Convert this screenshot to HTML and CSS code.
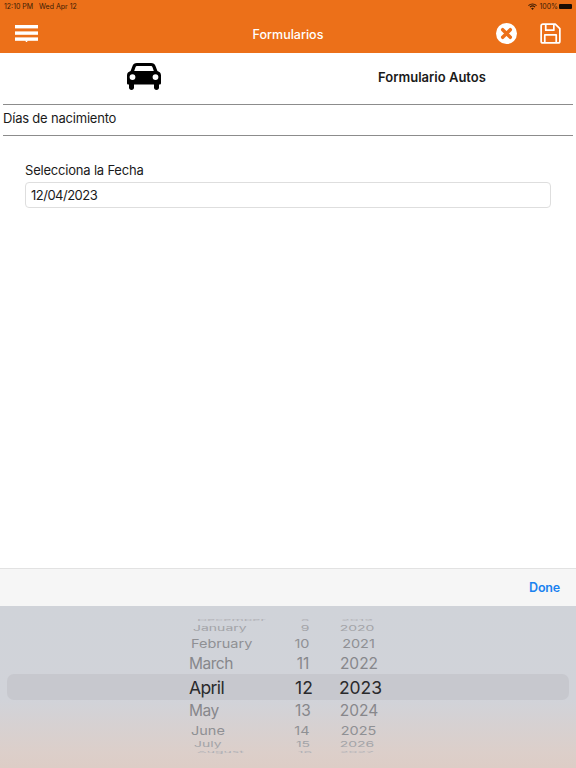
FILE: index.html
```html
<!DOCTYPE html>
<html lang="es">
<head>
    <meta charset="UTF-8">
    <meta name="viewport" content="width=device-width, initial-scale=1.0">
    <title>Formularios</title>
    <link rel="stylesheet" href="styles.css">
</head>
<body>
    <header class="app-header">
        <div class="status-bar">
            <span class="status-time">12:10 PM&nbsp;&nbsp; Wed Apr 12</span>
            <span class="status-right">
                <svg class="wifi-icon" viewBox="0 0 12 9" width="9" height="7" fill="none" stroke="#3a1c05" stroke-width="1.4">
                    <path d="M.6 3.2 A8 8 0 0 1 11.4 3.2"/>
                    <path d="M2.6 5.2 A5 5 0 0 1 9.4 5.2"/>
                    <path d="M6 9 L4.2 7 A2.6 2.6 0 0 1 7.8 7 Z" fill="#3a1c05" stroke="none"/>
                </svg>
                <span>100%</span>
                <span class="battery"></span>
            </span>
        </div>
        <div class="toolbar">
            <svg class="menu-icon" viewBox="0 0 23 17" width="23" height="17">
                <rect x="0" y="0" width="23" height="3.4" fill="#fff"/>
                <rect x="0" y="6.4" width="23" height="3.4" fill="#fff"/>
                <rect x="0" y="12.4" width="23" height="3.4" fill="#fff"/>
                <path d="M10 15.5h3L11.5 17.5z" fill="#fff"/>
            </svg>
            <div class="toolbar-title">Formularios</div>
            <div class="toolbar-actions">
                <svg viewBox="0 0 22 22" width="21" height="21">
                    <circle cx="11" cy="11" r="11" fill="#fff"/>
                    <path d="M7 7 L15 15 M15 7 L7 15" stroke="#ec7019" stroke-width="3.6" stroke-linecap="round"/>
                </svg>
                <svg viewBox="0 0 22 22" width="21" height="21" fill="none" stroke="#fff" stroke-width="1.8" stroke-linejoin="round">
                    <path d="M3 1.2 H16 L20.8 6 V19 A1.8 1.8 0 0 1 19 20.8 H3 A1.8 1.8 0 0 1 1.2 19 V3 A1.8 1.8 0 0 1 3 1.2 Z"/>
                    <path d="M6 1.5 V7.5 H14.5 V1.5"/>
                    <path d="M5 20.5 V12.5 H17 V20.5"/>
                </svg>
            </div>
        </div>
    </header>

    <div class="form-head">
        <div class="form-head-icon">
            <svg viewBox="0 0 34 27" width="34" height="27">
                <path fill="#000" fill-rule="evenodd" d="M10 0 H24 C26.5 0 27.8 1.2 28.6 3.2 L30.4 8 C32.6 8.6 34 10.2 34 12.4 V20 C34 21 33.4 21.5 32.5 21.5 H32 V24.5 C32 26 31 27 29.5 27 C28 27 27 26 27 24.5 V21.5 H7 V24.5 C7 26 6 27 4.5 27 C3 27 2 26 2 24.5 V21.5 H1.5 C.6 21.5 0 21 0 20 V12.4 C0 10.2 1.4 8.6 3.6 8 L5.4 3.2 C6.2 1.2 7.5 0 10 0 Z M10.4 3 C9.4 3 8.8 3.4 8.4 4.4 L7.2 8 H26.8 L25.6 4.4 C25.2 3.4 24.6 3 23.6 3 Z M5.5 11.2 A2.9 2.9 0 1 0 5.5 17 A2.9 2.9 0 1 0 5.5 11.2 Z M28.5 11.2 A2.9 2.9 0 1 0 28.5 17 A2.9 2.9 0 1 0 28.5 11.2 Z"/>
            </svg>
        </div>
        <div class="form-head-title">Formulario Autos</div>
    </div>

    <div class="section-title">Días de nacimiento</div>

    <div class="form-group">
        <label for="fecha">Selecciona la Fecha</label>
        <input type="text" id="fecha" name="fecha" value="12/04/2023">
    </div>

    <div class="spacer"></div>

    <div class="picker-bar">
        <span class="done">Done</span>
    </div>
    <div class="picker">
        <div class="picker-band"></div>
        <div class="picker-row row-sliver sliver-top"><span>December</span><span>8</span><span>2019</span></div>
        <div class="picker-row row-far far-top"><span>January</span><span>9</span><span>2020</span></div>
        <div class="picker-row row-mid mid-top"><span>February</span><span>10</span><span>2021</span></div>
        <div class="picker-row row-near"><span>March</span><span>11</span><span>2022</span></div>
        <div class="picker-row row-active"><span>April</span><span>12</span><span>2023</span></div>
        <div class="picker-row row-near"><span>May</span><span>13</span><span>2024</span></div>
        <div class="picker-row row-mid mid-bottom"><span>June</span><span>14</span><span>2025</span></div>
        <div class="picker-row row-far far-bottom"><span>July</span><span>15</span><span>2026</span></div>
        <div class="picker-row row-sliver sliver-bottom"><span>August</span><span>16</span><span>2027</span></div>
    </div>
</body>
</html>
```

FILE: styles.css
```css
* {
    box-sizing: border-box;
}
html, body {
    height: 100%;
}
body {
    margin: 0;
    display: flex;
    flex-direction: column;
    height: 768px;
    overflow: hidden;
    background-color: #fff;
    color: #1a1a1a;
    font-family: Inter, "Liberation Sans", sans-serif;
}

.app-header {
    height: 53px;
    background-color: #ec7019;
    padding-top: 1px;
}
.status-bar {
    display: flex;
    justify-content: space-between;
    align-items: center;
    height: 10px;
    padding: 1px 4px 0;
    font-size: 7px;
    line-height: 10px;
    color: #3a1c05;
}
.status-right {
    display: flex;
    align-items: center;
    gap: 2px;
}
.battery {
    width: 13px;
    height: 5px;
    margin-left: -1px;
    background-color: #1c0e04;
    border-radius: 1px;
}
.toolbar {
    display: grid;
    grid-template-columns: 1fr auto 1fr;
    align-items: center;
    height: 42px;
    padding: 2px 15px 0;
}
.menu-icon {
    display: block;
}
.toolbar-title {
    padding-top: 2px;
    color: #fff;
    font-size: 12.5px;
    font-weight: 500;
}
.toolbar-actions {
    display: flex;
    justify-content: flex-end;
    gap: 23px;
}

.form-head {
    display: grid;
    grid-template-columns: 1fr 1fr;
    align-items: center;
    height: 52px;
    margin: 0 3px;
    padding-bottom: 4px;
    border-bottom: 1px solid #8c8c8c;
    text-align: center;
}
.form-head-icon svg {
    display: block;
    margin: 0 auto;
    position: relative;
    left: -2px;
}
.form-head-title {
    padding-left: 3px;
    font-size: 13px;
    font-weight: 600;
}
.section-title {
    height: 31px;
    margin: 0 3px;
    border-bottom: 1px solid #8c8c8c;
    font-size: 13px;
    letter-spacing: -.2px;
    line-height: 27px;
}

.form-group {
    padding: 26px 25px 0;
}
.form-group label {
    display: block;
    height: 20px;
    font-size: 13px;
    letter-spacing: -.2px;
    line-height: 17px;
}
.form-group input {
    display: block;
    width: 100%;
    height: 26px;
    padding: 0 5px;
    border: 1px solid #dedede;
    border-radius: 4px;
    color: #1a1a1a;
    font-family: inherit;
    font-size: 13px;
    letter-spacing: -.5px;
}

.spacer {
    flex: 1;
}

.picker-bar {
    display: flex;
    justify-content: flex-end;
    align-items: center;
    height: 38px;
    padding-right: 16px;
    background-color: #f6f6f6;
    border-top: 1px solid #e2e2e2;
}
.done {
    color: #1a82f0;
    font-size: 12.5px;
    font-weight: 600;
    letter-spacing: -.2px;
}

.picker {
    position: relative;
    height: 162px;
    padding-top: 12px;
    background: linear-gradient(#d0d3d9 0%, #d1d3d9 58%, #dccfca 90%, #ddcdc6 100%);
}
.picker-band {
    position: absolute;
    top: 68px;
    left: 7px;
    right: 7px;
    height: 26px;
    background-color: #c7c8ce;
    border-radius: 7px;
}
.picker-row {
    position: relative;
    display: grid;
    grid-template-columns: 95px 40px 73px;
    grid-template-rows: 100%;
    align-items: center;
    margin-left: 189px;
    text-align: center;
    white-space: nowrap;
}
.picker-row span:first-child {
    text-align: left;
}

.row-active {
    height: 26px;
    color: #2a2a2c;
    font-size: 17.5px;
}
.row-active span:first-child {
    letter-spacing: -.6px;
}
.row-near {
    grid-template-columns: 94px 40px 72px;
    height: 21px;
    color: #87878b;
    font-size: 15.5px;
}
.row-near span:first-child {
    letter-spacing: -.5px;
}
.row-mid {
    grid-template-columns: 91px 40px 73px;
    height: 19px;
    color: #8f9094;
    font-size: 14.5px;
    transform: scaleY(.8);
}
.mid-top {
    margin-left: 191px;
    height: 20px;
}
.mid-bottom {
    margin-left: 191px;
    height: 18px;
}
.row-far {
    grid-template-columns: 92px 40px 64px;
    height: 10px;
    color: #a3a4a8;
    font-size: 14px;
    transform: scaleY(.55);
}
.far-top {
    margin-left: 193px;
}
.far-bottom {
    grid-template-columns: 89px 40px 68px;
    margin-left: 194px;
}
.row-sliver {
    grid-template-columns: 88px 40px 64px;
    height: 6px;
    color: #b0b1b6;
    font-size: 14px;
    transform: scaleY(.18);
}
.sliver-top {
    height: 5px;
    margin-left: 197px;
}
.sliver-bottom {
    margin-left: 197px;
}
```
